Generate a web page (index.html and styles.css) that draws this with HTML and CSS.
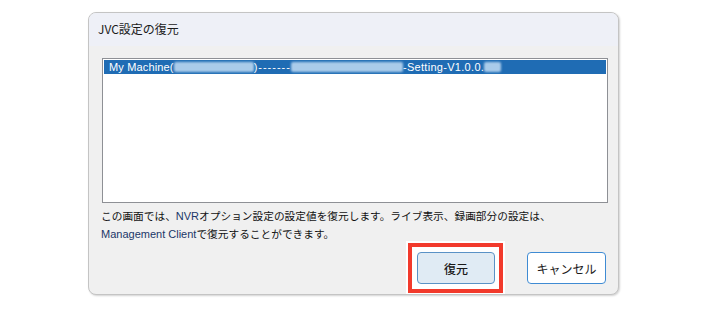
FILE: index.html
```html
<!DOCTYPE html>
<html lang="ja">
<head>
<meta charset="utf-8">
<title>JVC設定の復元</title>
<link rel="stylesheet" href="styles.css">
</head>
<body>
<div class="dialog">
  <div class="titlebar">JVC設定の復元</div>
  <div class="content">
    <div class="listbox">
      <div class="row selected">
        <span class="lat">My Machine(</span><span class="blur b1"></span><span class="lat dash">)-------</span><span class="blur b2"></span><span class="lat ver">-Setting-V1.0.0.</span><span class="blur b3"></span>
      </div>
    </div>
    <p class="desc">この画面では、<span class="lat">NVR</span>オプション設定の設定値を復元します。ライブ表示、録画部分の設定は、<br><span class="lat">Management Client</span>で復元することができます。</p>
    <div class="actions">
      <div class="highlight">
        <button class="btn primary">復元</button>
      </div>
      <button class="btn">キャンセル</button>
    </div>
  </div>
</div>
</body>
</html>
```

FILE: styles.css
```css
html, body {
  margin: 0;
  padding: 0;
  background: #ffffff;
}
body {
  width: 708px;
  height: 310px;
  overflow: hidden;
  font-family: "Noto Sans CJK JP", "Liberation Sans", sans-serif;
  color: #1a1a1a;
}
.dialog {
  margin: 12px 0 0 88px;
  width: 529px;
  height: 281px;
  border: 1px solid #c4c4c4;
  border-radius: 8px;
  overflow: hidden;
  background: #f0f0f0;
  box-shadow: 1px 1px 2px rgba(0, 0, 0, 0.18);
  display: flex;
  flex-direction: column;
}
.titlebar {
  height: 33px;
  flex: none;
  background: #eef0f7;
  box-sizing: border-box;
  padding: 8px 0 0 9px;
  font-size: 12px;
  line-height: 16px;
  color: #1a1a1a;
}
.content {
  flex: 1;
  display: flex;
  flex-direction: column;
  padding: 12px 10px 0 13px;
}
.listbox {
  height: 145px;
  box-sizing: border-box;
  border: 1px solid #8e9095;
  background: #ffffff;
  padding: 1px;
}
.row {
  height: 14px;
  display: flex;
  align-items: center;
  padding-left: 5px;
  font-size: 11px;
  line-height: 14px;
}
.row.selected {
  background: #1f6cb4;
  color: #ffffff;
}
.lat {
  font-family: "Liberation Sans", sans-serif;
  font-size: 11px;
}
.row .lat {
  letter-spacing: 0.15px;
}
.row .dash {
  letter-spacing: 1px;
}
.row .ver {
  letter-spacing: 0.3px;
}
.blur {
  display: inline-block;
  height: 10px;
  background: #a9cbea;
  filter: blur(1.2px);
  border-radius: 2px;
}
.b1 { width: 80px; }
.b2 { width: 112px; }
.b3 { width: 17px; }
.desc {
  margin: 4px 0 0 -1px;
  font-size: 10.7px;
  line-height: 18px;
  color: #111111;
}
.desc .lat {
  color: #1b3768;
}
.actions {
  display: flex;
  justify-content: flex-end;
  align-items: center;
  gap: 24px;
  margin-right: 2px;
}
.highlight {
  border: 4px solid #f23a2c;
  padding: 5px 4px 5px 5px;
  box-shadow: 0 0 0 2px #ffffff;
  background: #ffffff;
  display: flex;
}
.btn {
  width: 79px;
  height: 32px;
  box-sizing: border-box;
  border: 1px solid #3f8bd3;
  border-radius: 4px;
  background: #ffffff;
  font-family: "Noto Sans CJK JP", sans-serif;
  font-size: 12px;
  color: #1a1a1a;
  padding: 0;
}
.btn.primary {
  width: 78px;
  background: #e0ebf4;
  border-color: #5a92c6;
  font-weight: 500;
}
```
